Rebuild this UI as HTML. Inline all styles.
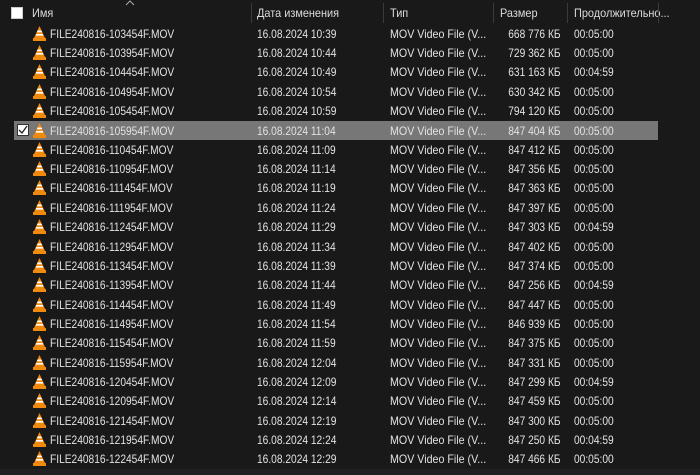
<!DOCTYPE html>
<html><head><meta charset="utf-8"><style>
body{margin:0;width:700px;height:475px;background:#191919;overflow:hidden;font-family:"Liberation Sans",sans-serif;font-size:12px;color:#e2e2e2;position:relative}
.h{position:absolute;top:0;left:0;width:700px;height:24px}
.h span{position:absolute;top:6px;color:#dcdcdc;transform:scaleX(0.91);transform-origin:left}
.d{position:absolute;top:3px;width:1px;height:20px;background:#3a3a3a}
.r{position:absolute;left:0;width:700px;height:19px}
.r span{position:absolute;top:3px;white-space:nowrap;transform:scaleX(0.85);transform-origin:left}
.r span.t{transform:scaleX(0.89)}
.r span.s{transform-origin:right}
.r svg{position:absolute;left:33px;top:2px}
.n{left:50px}.dt{left:257px}.t{left:390px}.s{right:139px}.du{left:574px}
.sel{background:#777;left:14px;width:644px}
.sel .n{left:36px}.sel .dt{left:243px}.sel .t{left:376px}.sel .s{right:97px}.sel .du{left:560px}.sel svg{left:19px}
.cb{position:absolute;width:10px;height:10px;background:#fff;border:1px solid #ccc}
</style></head><body>
<div class="h">
<div class="cb" style="left:11px;top:7px"></div>
<span style="left:32px">Имя</span>
<svg style="position:absolute;left:125px;top:0" width="10" height="6"><path d="M1 5 L5 1 L9 5" stroke="#aaa" fill="none"/></svg>
<div class="d" style="left:251px"></div><span style="left:257px">Дата изменения</span>
<div class="d" style="left:383px"></div><span style="left:390px">Тип</span>
<div class="d" style="left:493px"></div><span style="left:500px">Размер</span>
<div class="d" style="left:567px"></div><span style="left:574px">Продолжительно...</span>
<div class="d" style="left:658px"></div>
</div>
<div style="position:absolute;left:0;top:469px;width:700px;height:6px;background:#202020"></div>
<div class="r" style="top:23.5px"><svg width="13" height="15" viewBox="0 0 13 15"><path d="M6.5 0 L12 12 L1 12Z" fill="#f08a0c"/><path d="M4.6 4.5 L8.4 4.5 L9.1 6.2 L3.9 6.2Z M3.3 8 L9.7 8 L10.4 9.6 L2.6 9.6Z" fill="#fff"/><rect x="0" y="12" width="13" height="3" fill="#f08a0c"/></svg><span class="n">FILE240816-103454F.MOV</span><span class="dt">16.08.2024 10:39</span><span class="t">MOV Video File (V...</span><span class="s">668 776 КБ</span><span class="du">00:05:00</span></div>
<div class="r" style="top:42.9px"><svg width="13" height="15" viewBox="0 0 13 15"><path d="M6.5 0 L12 12 L1 12Z" fill="#f08a0c"/><path d="M4.6 4.5 L8.4 4.5 L9.1 6.2 L3.9 6.2Z M3.3 8 L9.7 8 L10.4 9.6 L2.6 9.6Z" fill="#fff"/><rect x="0" y="12" width="13" height="3" fill="#f08a0c"/></svg><span class="n">FILE240816-103954F.MOV</span><span class="dt">16.08.2024 10:44</span><span class="t">MOV Video File (V...</span><span class="s">729 362 КБ</span><span class="du">00:05:00</span></div>
<div class="r" style="top:62.2px"><svg width="13" height="15" viewBox="0 0 13 15"><path d="M6.5 0 L12 12 L1 12Z" fill="#f08a0c"/><path d="M4.6 4.5 L8.4 4.5 L9.1 6.2 L3.9 6.2Z M3.3 8 L9.7 8 L10.4 9.6 L2.6 9.6Z" fill="#fff"/><rect x="0" y="12" width="13" height="3" fill="#f08a0c"/></svg><span class="n">FILE240816-104454F.MOV</span><span class="dt">16.08.2024 10:49</span><span class="t">MOV Video File (V...</span><span class="s">631 163 КБ</span><span class="du">00:04:59</span></div>
<div class="r" style="top:81.6px"><svg width="13" height="15" viewBox="0 0 13 15"><path d="M6.5 0 L12 12 L1 12Z" fill="#f08a0c"/><path d="M4.6 4.5 L8.4 4.5 L9.1 6.2 L3.9 6.2Z M3.3 8 L9.7 8 L10.4 9.6 L2.6 9.6Z" fill="#fff"/><rect x="0" y="12" width="13" height="3" fill="#f08a0c"/></svg><span class="n">FILE240816-104954F.MOV</span><span class="dt">16.08.2024 10:54</span><span class="t">MOV Video File (V...</span><span class="s">630 342 КБ</span><span class="du">00:05:00</span></div>
<div class="r" style="top:100.9px"><svg width="13" height="15" viewBox="0 0 13 15"><path d="M6.5 0 L12 12 L1 12Z" fill="#f08a0c"/><path d="M4.6 4.5 L8.4 4.5 L9.1 6.2 L3.9 6.2Z M3.3 8 L9.7 8 L10.4 9.6 L2.6 9.6Z" fill="#fff"/><rect x="0" y="12" width="13" height="3" fill="#f08a0c"/></svg><span class="n">FILE240816-105454F.MOV</span><span class="dt">16.08.2024 10:59</span><span class="t">MOV Video File (V...</span><span class="s">794 120 КБ</span><span class="du">00:05:00</span></div>
<div class="r sel" style="top:121px"><div class="cb" style="left:3px;top:3px;background:#fff;border-color:#333"><svg style="position:absolute;left:0;top:0" width="10" height="10"><path d="M1 5 L4 8 L9 1" stroke="#222" stroke-width="1.3" fill="none"/></svg></div><svg width="13" height="15" viewBox="0 0 13 15"><path d="M6.5 0 L12 12 L1 12Z" fill="#f08a0c"/><path d="M4.6 4.5 L8.4 4.5 L9.1 6.2 L3.9 6.2Z M3.3 8 L9.7 8 L10.4 9.6 L2.6 9.6Z" fill="#fff"/><rect x="0" y="12" width="13" height="3" fill="#f08a0c"/></svg><span class="n">FILE240816-105954F.MOV</span><span class="dt">16.08.2024 11:04</span><span class="t">MOV Video File (V...</span><span class="s">847 404 КБ</span><span class="du">00:05:00</span></div>
<div class="r" style="top:139.7px"><svg width="13" height="15" viewBox="0 0 13 15"><path d="M6.5 0 L12 12 L1 12Z" fill="#f08a0c"/><path d="M4.6 4.5 L8.4 4.5 L9.1 6.2 L3.9 6.2Z M3.3 8 L9.7 8 L10.4 9.6 L2.6 9.6Z" fill="#fff"/><rect x="0" y="12" width="13" height="3" fill="#f08a0c"/></svg><span class="n">FILE240816-110454F.MOV</span><span class="dt">16.08.2024 11:09</span><span class="t">MOV Video File (V...</span><span class="s">847 412 КБ</span><span class="du">00:05:00</span></div>
<div class="r" style="top:159px"><svg width="13" height="15" viewBox="0 0 13 15"><path d="M6.5 0 L12 12 L1 12Z" fill="#f08a0c"/><path d="M4.6 4.5 L8.4 4.5 L9.1 6.2 L3.9 6.2Z M3.3 8 L9.7 8 L10.4 9.6 L2.6 9.6Z" fill="#fff"/><rect x="0" y="12" width="13" height="3" fill="#f08a0c"/></svg><span class="n">FILE240816-110954F.MOV</span><span class="dt">16.08.2024 11:14</span><span class="t">MOV Video File (V...</span><span class="s">847 356 КБ</span><span class="du">00:05:00</span></div>
<div class="r" style="top:178.4px"><svg width="13" height="15" viewBox="0 0 13 15"><path d="M6.5 0 L12 12 L1 12Z" fill="#f08a0c"/><path d="M4.6 4.5 L8.4 4.5 L9.1 6.2 L3.9 6.2Z M3.3 8 L9.7 8 L10.4 9.6 L2.6 9.6Z" fill="#fff"/><rect x="0" y="12" width="13" height="3" fill="#f08a0c"/></svg><span class="n">FILE240816-111454F.MOV</span><span class="dt">16.08.2024 11:19</span><span class="t">MOV Video File (V...</span><span class="s">847 363 КБ</span><span class="du">00:05:00</span></div>
<div class="r" style="top:197.7px"><svg width="13" height="15" viewBox="0 0 13 15"><path d="M6.5 0 L12 12 L1 12Z" fill="#f08a0c"/><path d="M4.6 4.5 L8.4 4.5 L9.1 6.2 L3.9 6.2Z M3.3 8 L9.7 8 L10.4 9.6 L2.6 9.6Z" fill="#fff"/><rect x="0" y="12" width="13" height="3" fill="#f08a0c"/></svg><span class="n">FILE240816-111954F.MOV</span><span class="dt">16.08.2024 11:24</span><span class="t">MOV Video File (V...</span><span class="s">847 397 КБ</span><span class="du">00:05:00</span></div>
<div class="r" style="top:217.1px"><svg width="13" height="15" viewBox="0 0 13 15"><path d="M6.5 0 L12 12 L1 12Z" fill="#f08a0c"/><path d="M4.6 4.5 L8.4 4.5 L9.1 6.2 L3.9 6.2Z M3.3 8 L9.7 8 L10.4 9.6 L2.6 9.6Z" fill="#fff"/><rect x="0" y="12" width="13" height="3" fill="#f08a0c"/></svg><span class="n">FILE240816-112454F.MOV</span><span class="dt">16.08.2024 11:29</span><span class="t">MOV Video File (V...</span><span class="s">847 303 КБ</span><span class="du">00:04:59</span></div>
<div class="r" style="top:236.5px"><svg width="13" height="15" viewBox="0 0 13 15"><path d="M6.5 0 L12 12 L1 12Z" fill="#f08a0c"/><path d="M4.6 4.5 L8.4 4.5 L9.1 6.2 L3.9 6.2Z M3.3 8 L9.7 8 L10.4 9.6 L2.6 9.6Z" fill="#fff"/><rect x="0" y="12" width="13" height="3" fill="#f08a0c"/></svg><span class="n">FILE240816-112954F.MOV</span><span class="dt">16.08.2024 11:34</span><span class="t">MOV Video File (V...</span><span class="s">847 402 КБ</span><span class="du">00:05:00</span></div>
<div class="r" style="top:255.8px"><svg width="13" height="15" viewBox="0 0 13 15"><path d="M6.5 0 L12 12 L1 12Z" fill="#f08a0c"/><path d="M4.6 4.5 L8.4 4.5 L9.1 6.2 L3.9 6.2Z M3.3 8 L9.7 8 L10.4 9.6 L2.6 9.6Z" fill="#fff"/><rect x="0" y="12" width="13" height="3" fill="#f08a0c"/></svg><span class="n">FILE240816-113454F.MOV</span><span class="dt">16.08.2024 11:39</span><span class="t">MOV Video File (V...</span><span class="s">847 374 КБ</span><span class="du">00:05:00</span></div>
<div class="r" style="top:275.2px"><svg width="13" height="15" viewBox="0 0 13 15"><path d="M6.5 0 L12 12 L1 12Z" fill="#f08a0c"/><path d="M4.6 4.5 L8.4 4.5 L9.1 6.2 L3.9 6.2Z M3.3 8 L9.7 8 L10.4 9.6 L2.6 9.6Z" fill="#fff"/><rect x="0" y="12" width="13" height="3" fill="#f08a0c"/></svg><span class="n">FILE240816-113954F.MOV</span><span class="dt">16.08.2024 11:44</span><span class="t">MOV Video File (V...</span><span class="s">847 256 КБ</span><span class="du">00:04:59</span></div>
<div class="r" style="top:294.5px"><svg width="13" height="15" viewBox="0 0 13 15"><path d="M6.5 0 L12 12 L1 12Z" fill="#f08a0c"/><path d="M4.6 4.5 L8.4 4.5 L9.1 6.2 L3.9 6.2Z M3.3 8 L9.7 8 L10.4 9.6 L2.6 9.6Z" fill="#fff"/><rect x="0" y="12" width="13" height="3" fill="#f08a0c"/></svg><span class="n">FILE240816-114454F.MOV</span><span class="dt">16.08.2024 11:49</span><span class="t">MOV Video File (V...</span><span class="s">847 447 КБ</span><span class="du">00:05:00</span></div>
<div class="r" style="top:313.9px"><svg width="13" height="15" viewBox="0 0 13 15"><path d="M6.5 0 L12 12 L1 12Z" fill="#f08a0c"/><path d="M4.6 4.5 L8.4 4.5 L9.1 6.2 L3.9 6.2Z M3.3 8 L9.7 8 L10.4 9.6 L2.6 9.6Z" fill="#fff"/><rect x="0" y="12" width="13" height="3" fill="#f08a0c"/></svg><span class="n">FILE240816-114954F.MOV</span><span class="dt">16.08.2024 11:54</span><span class="t">MOV Video File (V...</span><span class="s">846 939 КБ</span><span class="du">00:05:00</span></div>
<div class="r" style="top:333.3px"><svg width="13" height="15" viewBox="0 0 13 15"><path d="M6.5 0 L12 12 L1 12Z" fill="#f08a0c"/><path d="M4.6 4.5 L8.4 4.5 L9.1 6.2 L3.9 6.2Z M3.3 8 L9.7 8 L10.4 9.6 L2.6 9.6Z" fill="#fff"/><rect x="0" y="12" width="13" height="3" fill="#f08a0c"/></svg><span class="n">FILE240816-115454F.MOV</span><span class="dt">16.08.2024 11:59</span><span class="t">MOV Video File (V...</span><span class="s">847 375 КБ</span><span class="du">00:05:00</span></div>
<div class="r" style="top:352.6px"><svg width="13" height="15" viewBox="0 0 13 15"><path d="M6.5 0 L12 12 L1 12Z" fill="#f08a0c"/><path d="M4.6 4.5 L8.4 4.5 L9.1 6.2 L3.9 6.2Z M3.3 8 L9.7 8 L10.4 9.6 L2.6 9.6Z" fill="#fff"/><rect x="0" y="12" width="13" height="3" fill="#f08a0c"/></svg><span class="n">FILE240816-115954F.MOV</span><span class="dt">16.08.2024 12:04</span><span class="t">MOV Video File (V...</span><span class="s">847 331 КБ</span><span class="du">00:05:00</span></div>
<div class="r" style="top:372px"><svg width="13" height="15" viewBox="0 0 13 15"><path d="M6.5 0 L12 12 L1 12Z" fill="#f08a0c"/><path d="M4.6 4.5 L8.4 4.5 L9.1 6.2 L3.9 6.2Z M3.3 8 L9.7 8 L10.4 9.6 L2.6 9.6Z" fill="#fff"/><rect x="0" y="12" width="13" height="3" fill="#f08a0c"/></svg><span class="n">FILE240816-120454F.MOV</span><span class="dt">16.08.2024 12:09</span><span class="t">MOV Video File (V...</span><span class="s">847 299 КБ</span><span class="du">00:04:59</span></div>
<div class="r" style="top:391.3px"><svg width="13" height="15" viewBox="0 0 13 15"><path d="M6.5 0 L12 12 L1 12Z" fill="#f08a0c"/><path d="M4.6 4.5 L8.4 4.5 L9.1 6.2 L3.9 6.2Z M3.3 8 L9.7 8 L10.4 9.6 L2.6 9.6Z" fill="#fff"/><rect x="0" y="12" width="13" height="3" fill="#f08a0c"/></svg><span class="n">FILE240816-120954F.MOV</span><span class="dt">16.08.2024 12:14</span><span class="t">MOV Video File (V...</span><span class="s">847 459 КБ</span><span class="du">00:05:00</span></div>
<div class="r" style="top:410.7px"><svg width="13" height="15" viewBox="0 0 13 15"><path d="M6.5 0 L12 12 L1 12Z" fill="#f08a0c"/><path d="M4.6 4.5 L8.4 4.5 L9.1 6.2 L3.9 6.2Z M3.3 8 L9.7 8 L10.4 9.6 L2.6 9.6Z" fill="#fff"/><rect x="0" y="12" width="13" height="3" fill="#f08a0c"/></svg><span class="n">FILE240816-121454F.MOV</span><span class="dt">16.08.2024 12:19</span><span class="t">MOV Video File (V...</span><span class="s">847 300 КБ</span><span class="du">00:05:00</span></div>
<div class="r" style="top:430px"><svg width="13" height="15" viewBox="0 0 13 15"><path d="M6.5 0 L12 12 L1 12Z" fill="#f08a0c"/><path d="M4.6 4.5 L8.4 4.5 L9.1 6.2 L3.9 6.2Z M3.3 8 L9.7 8 L10.4 9.6 L2.6 9.6Z" fill="#fff"/><rect x="0" y="12" width="13" height="3" fill="#f08a0c"/></svg><span class="n">FILE240816-121954F.MOV</span><span class="dt">16.08.2024 12:24</span><span class="t">MOV Video File (V...</span><span class="s">847 250 КБ</span><span class="du">00:04:59</span></div>
<div class="r" style="top:449.4px"><svg width="13" height="15" viewBox="0 0 13 15"><path d="M6.5 0 L12 12 L1 12Z" fill="#f08a0c"/><path d="M4.6 4.5 L8.4 4.5 L9.1 6.2 L3.9 6.2Z M3.3 8 L9.7 8 L10.4 9.6 L2.6 9.6Z" fill="#fff"/><rect x="0" y="12" width="13" height="3" fill="#f08a0c"/></svg><span class="n">FILE240816-122454F.MOV</span><span class="dt">16.08.2024 12:29</span><span class="t">MOV Video File (V...</span><span class="s">847 466 КБ</span><span class="du">00:05:00</span></div>
</body></html>
